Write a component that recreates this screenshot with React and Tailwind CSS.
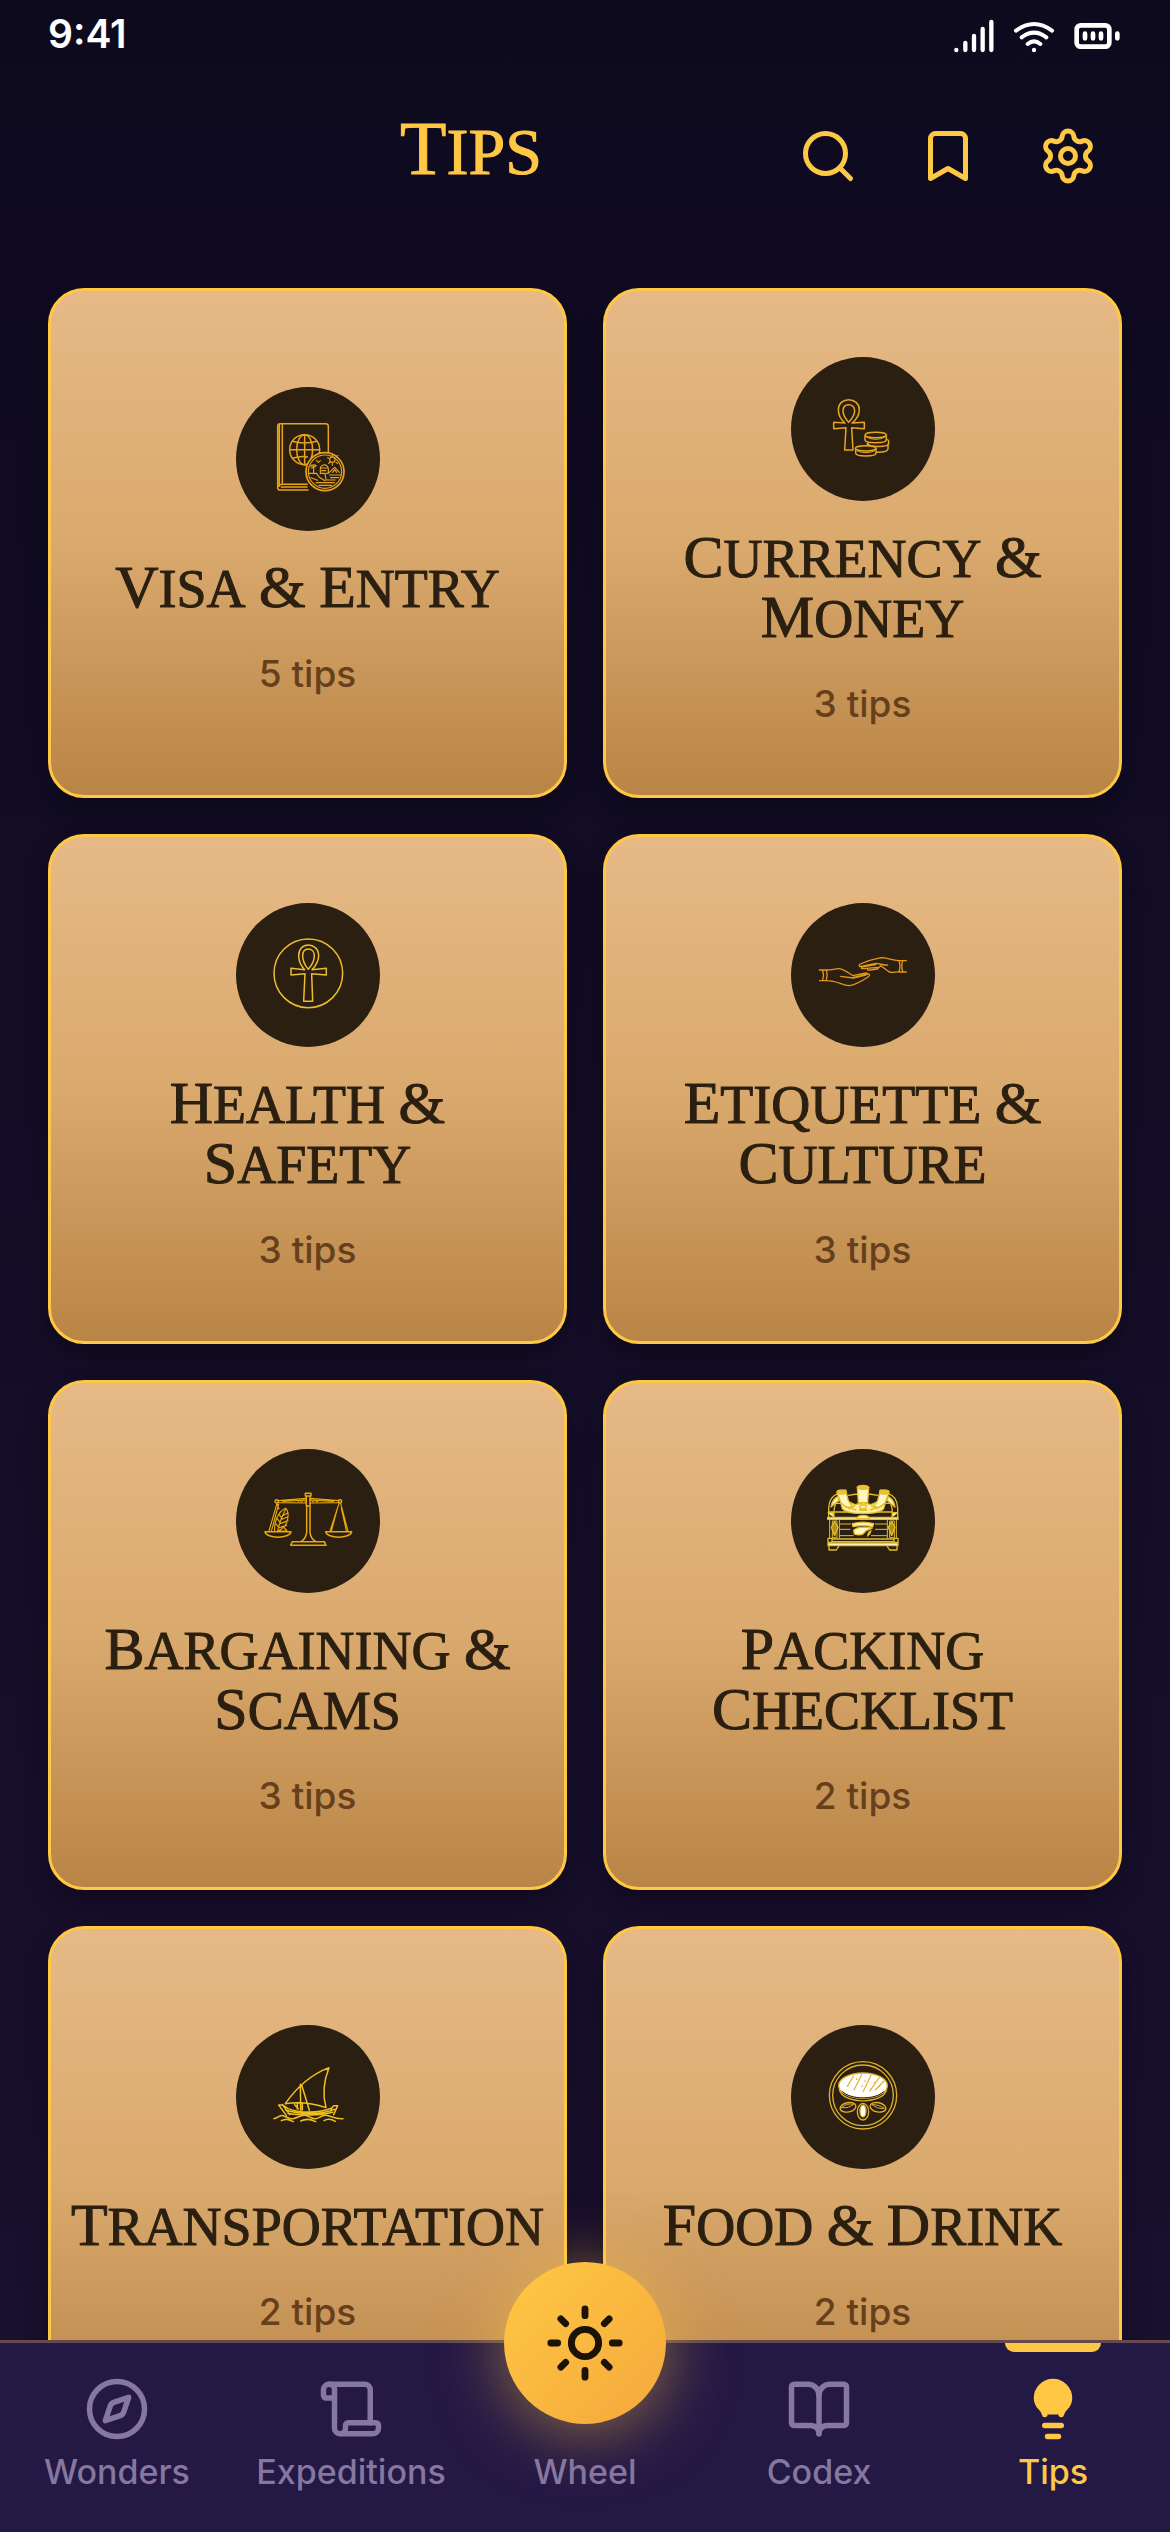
import React from "react";
import {
  Bookmark,
  BookOpen,
  Compass,
  Lightbulb,
  Scroll,
  Search,
  Settings,
  Sun,
} from "lucide-react";

const PassportIcon = () => (
  <svg className="size-full" viewBox="50 50 432 432" fill="none" stroke="#e9a31c" strokeWidth="4.5" strokeLinecap="round" strokeLinejoin="round">
    <path d="M266 359H182a7 7 0 0 1-7-7V168a8 8 0 0 1 8-8h136a8 8 0 0 1 8 8v78M189 161v181M180 161v186M189 342h74M176 350q4-8 13-8M186 350h77" />
    <circle cx="256" cy="238" r="45" />
    <ellipse cx="256" cy="238" rx="24" ry="45" />
    <path d="M256 193v90M211 238h90M219 213q37 10 74 0M219 264q30-9 45-4" />
    <circle cx="317" cy="304" r="57" fill="#2a1f10" strokeWidth="5" />
    <circle cx="317" cy="304" r="50" strokeWidth="3.5" />
    <circle cx="339" cy="268" r="8" strokeWidth="3.5" />
    <path strokeWidth="3.5" d="M339 252v5M325 262l4 2M328 279l4-3M350 260l5-4M350 276l5 4M339 280v5M291 270l6 6 6-5M274 288q8-8 17-2M276 284l7 4v22M276 293l12-4M270 309h22l8 12 17 10M303 309v-13a12 12 0 0 1 24-1v14h-6M305 293h20M307 301h12M304 309h13M317 309l3 20h28M330 306l16-15 14 15M340 306l6-8 6 8M331 314h33M334 322h24M275 322l20 8M290 337h55M299 345h38" />
  </svg>
);

const CurrencyIcon = () => (
  <svg className="size-full" viewBox="36 50 432 432" fill="none" stroke="#e6a522" strokeWidth="4.5" strokeLinejoin="round">
    <path d="M198 248C184 236 178 222 178 208c0-18 14-30 31-30s32 12 32 30c0 14-7 28-22 40l37-2v19l-38-3 4 67h-25l4-67-37 3v-19z" />
    <path d="M209 246c-10-11-17-24-17-34 0-12 7-19 17-19s18 7 18 19c0 10-8 23-18 34z" />
    <g fill="#2a1f10">
      <path d="M265 309v16c0 14 62 14 62 0v-16" />
      <path d="M267 302v7c0 13 62 13 62 0v-7c0-9-62-9-62 0z" />
      <path d="M258 285v13c0 12 64 12 64 0v-13" />
      <ellipse cx="290" cy="284" rx="32" ry="8" />
      <path d="M230 324v14c0 12 61 12 61 0v-14" />
      <ellipse cx="260" cy="324" rx="31" ry="8" />
    </g>
    <path d="M262 290q28 14 56 0M233 331q28 12 55 0" strokeWidth="3" />
  </svg>
);

const HealthIcon = () => (
  <svg className="size-full" viewBox="50 39 432 432" fill="none" stroke="#ecbd30" strokeWidth="4.5" strokeLinejoin="round">
    <circle cx="267" cy="250" r="103" />
    <path d="M256 239c-12-13-18-28-18-42 0-20 13-32 29-32s31 12 31 32c0 14-8 29-20 42l43-4v20l-44-4 3 83h-27l4-83-42 4v-20z" />
    <path d="M267 238c-11-13-17-28-17-40s6-21 17-21 18 9 18 21-7 27-18 40z" />
  </svg>
);

const HandsIcon = () => (
  <svg className="size-full" viewBox="36 39 432 432" fill="none" stroke="#e2981c" strokeWidth="4" strokeLinecap="round" strokeLinejoin="round">
    <path d="M121 240h22c12 1 25-4 36-4 14 0 28 12 43 21l39-8c5 0 3 5-1 6l-37 9-38-5M223 262l45-10c6 0 4 7-1 9-18 12-40 24-57 26-20-2-38-15-67-15h-21M131 240q5 16 0 32M142 240q5 16 0 32" />
    <path d="M382 212h-23c-20-1-35-9-53-9-22 4-43 11-62 19-6 3-4 8 2 7l44-9c13 0 23 7 36 5M290 224l-42 7c-4 4 1 5 6 5l42-4M266 236c-3 4 3 5 8 4l21-3 10-10 26 19c10 3 20-1 30 0h21M360 212q6 18 0 32M371 212q-5 18 0 32" />
  </svg>
);

const ScalesIcon = () => (
  <svg className="size-full" viewBox="50 57 432 432" fill="none" stroke="#e7a80f" strokeWidth="4.5" strokeLinecap="round" strokeLinejoin="round">
    <path d="M258 190h17v8h-17zM261 198h11v30h-11zM262 228v80c-2 14-8 22-18 27M272 228v80c2 14 8 22 18 27M261 228h11M219 335h96l5 11H214z" />
    <path d="M261 205l-84 7v6l84 1M272 205l86 7v6l-86 1M190 214l71-4M343 214l-71-4" strokeWidth="3.5" />
    <path d="M237 216l4-6 6 7 5-8 7 8M276 210l6 7 5-7 6 7 5-7" strokeWidth="3" />
    <circle cx="172" cy="214" r="5" />
    <circle cx="362" cy="214" r="5" />
    <path d="M137 305h78c-3 22-75 22-78 0zM319 305h78c-3 22-75 22-78 0z" />
    <path d="M173 220l-24 83M178 222l-22 82M173 220l6 17M359 220l-27 84M364 220l22 84M354 236l-18 67M366 234l15 68" strokeWidth="3.5" />
    <path d="M166 304c-2-25 8-58 33-69 8 6 10 24 3 43-5 12-15 20-27 26M175 303c5-25 12-43 23-64M177 290l-8-9M182 277l-9-12M188 264l-8-9M180 293l22-7M183 281l23-9M188 268l18-8M193 256l13-8M192 290l11 13h-24" strokeWidth="3.5" />
  </svg>
);

const ChestIcon = () => (
  <svg className="size-full" viewBox="36 57 432 432" fill="none" stroke="#e3bd2b" strokeWidth="4" strokeLinejoin="round">
    <path d="M149 262v-28c1-24 12-38 29-43M356 262v-28c-1-24-12-38-29-43M207 196q46-8 90 0M165 262v-20c1-16 5-24 12-32M340 262v-20c-1-16-5-24-12-32M166 220h30M310 220h30M150 246h190" />
    <path d="M178 199c-13 6-20 16-22 32l10-9 12-9zM326 199c13 6 20 16 22 32l-10-9-12-9z" fill="#fff6c4" />
    <path d="M182 208l8 28c10 10 24 13 42 14h40c18-1 32-4 42-14l8-28-24 6-22 10-24-6-24 6-22-10z" fill="#fdf0a2" />
    <path d="M174 188l26-8 8 32 12 18-18 2-16-13zM330 188l-26-8-8 32-12 18 18 2 16-13z" fill="#fff6c4" />
    <path d="M235 172h34l-3 46h-28z" fill="#fff6c4" />
    <ellipse cx="252" cy="172" rx="17" ry="6" fill="#e8c63c" />
    <ellipse cx="188" cy="186" rx="14" ry="6" fill="#e8c63c" />
    <ellipse cx="316" cy="186" rx="14" ry="6" fill="#e8c63c" />
    <path d="M193 225l18 11 18-9M276 227l18 9 18-11M209 233l22 7M295 233l-22 7M243 225h18v12h-18zM241 241h24" />
    <path d="M146 262h211v6H146zM146 248h17v14M357 248h-17v14" fill="#fdf0a2" />
    <path d="M234 266c1-13 36-13 37 0z" fill="#fff3ad" />
    <path d="M152 268v58M352 268v58M181 268v58M325 268v58M160 273h14v50h-14zM332 273h14v50h-14z" strokeWidth="3" />
    <path d="M167 275l10 17-10 25-10-25zM338 275l10 17-10 25-10-25z" fill="#b08c18" />
    <path d="M182 282h34M182 298h32M182 317h42M288 282h36M288 298h36M276 317h48" strokeWidth="3" />
    <path d="M220 281q32-9 64 0l-3 9q-30-6-59 0z" fill="#fff3ad" />
    <path d="M224 301c10-10 34-11 56-7-8 6-20 4-24 14-4 7-20 9-30 4zM266 318c1-8 3-13 10-16-2 8-4 12-10 16z" fill="#fff6c4" />
    <path d="M147 325h12v12h-12zM345 325h12v12h-12zM159 327h186M159 335h186" />
    <path d="M147 339h210v8H147z" fill="#fff3ad" />
    <path d="M150 348v12h22l8-12M354 348v12h-22l-8-12" />
  </svg>
);

const BoatIcon = () => (
  <svg className="size-full" viewBox="50 45 432 432" fill="none" stroke="#f0c020" strokeWidth="4.5" strokeLinecap="round" strokeLinejoin="round">
    <path d="M198 281c32-46 76-87 131-108-16 40-20 80-9 120-40-14-85-18-122-12zM319 178l8 2M243 223l1 78M247 225l23 76M249 280v20M226 284l11 12M234 281v16" />
    <path d="M178 285l11-1 17 12c35 14 94 14 132-2l5-7h12l-12 27M178 285l23 31M189 284l22 30M199 300c40 14 108 14 147-2M206 310c32 7 100 7 134-3M338 294l-4 9" />
    <path d="M164 326c12-2 17-11 27-9 14 3 17 12 30 9 13-2 22-11 35-10 14 1 20 12 33 10 12-1 18-11 30-10 20 2 26 12 52 10M186 332c14-6 22-4 36 3M244 333c16-8 30-6 45 2M314 332c10-6 24-4 34 2" />
  </svg>
);

const FoodIcon = () => (
  <svg className="size-full" viewBox="36 45 432 432" fill="none" stroke="#e0b02e" strokeWidth="4" strokeLinecap="round">
    <circle cx="252" cy="256" r="101" />
    <circle cx="252" cy="256" r="91" />
    <path d="M181 238c8 46 134 46 142 0" strokeWidth="4" />
    <ellipse cx="252" cy="227" rx="73" ry="38" fill="#fff" />
    <path d="M191 245c20 24 100 26 122 0" stroke="#2a1f10" strokeWidth="3" />
    <path d="M223 199l-18 30M248 194l-23 46M276 196l-23 48M301 203l-29 40M315 213l-26 27" strokeWidth="3.5" />
    <path d="M233 207v1M258 213v1M249 228v1M286 217v1M275 238v1M302 228v1" stroke="#e9a31c" />
    <ellipse cx="207" cy="292" rx="24" ry="14" transform="rotate(-12 207 292)" />
    <ellipse cx="297" cy="292" rx="24" ry="14" transform="rotate(12 297 292)" />
    <path d="M188 293c12-11 22-12 36-10-10 7-20 12-36 10zM280 284c14 0 24 3 36 11-14 2-26-2-36-11z" strokeWidth="3" />
    <ellipse cx="252" cy="305" rx="17" ry="25" />
    <ellipse cx="252" cy="303" rx="9" ry="18" fill="#fff" />
  </svg>
);

const categories = [
  { title: "Visa & Entry", count: 5, Icon: PassportIcon },
  { title: "Currency & Money", count: 3, Icon: CurrencyIcon },
  { title: "Health & Safety", count: 3, Icon: HealthIcon },
  { title: "Etiquette & Culture", count: 3, Icon: HandsIcon },
  { title: "Bargaining & Scams", count: 3, Icon: ScalesIcon },
  { title: "Packing Checklist", count: 2, Icon: ChestIcon },
  { title: "Transportation", count: 2, Icon: BoatIcon },
  { title: "Food & Drink", count: 2, Icon: FoodIcon },
];

const tabs = [
  { label: "Wonders", Icon: Compass },
  { label: "Expeditions", Icon: Scroll },
  { label: "Wheel", center: true },
  { label: "Codex", Icon: BookOpen },
  { label: "Tips", Icon: Lightbulb, active: true },
];

const StatusBar = () => (
  <div className="flex items-center justify-between px-12 h-[72px] shrink-0 text-white">
    <span className="pb-1 text-[39px] leading-[60px] font-semibold">9:41</span>
    <svg className="w-[168px] h-9" viewBox="75 54 504 108" fill="none" stroke="#fff" strokeLinecap="round">
      <path strokeWidth="13" d="M82 150v.1M109 129v21M135 108v42M161 87v63M187 66v84M315 150v.1" />
      <path strokeWidth="12" d="M261 92q54-40 108 0M278 112q37-28 74 0M296 132q19-16 38 0" />
      <rect x="443" y="76" width="98" height="64" rx="12" strokeWidth="14" />
      <path strokeWidth="14" d="M468 101v14M492 101v14M516 101v14M565 101v14" />
    </svg>
  </div>
);

const Header = () => (
  <header className="flex items-center gap-3 px-12 pt-[30px] pb-[78px] shrink-0 text-[#ffc844]">
    <div className="w-30" />
    <h1 className="flex-1 pb-2 text-center font-['Liberation_Serif',serif] uppercase text-[66px] leading-[84px] [-webkit-text-stroke:1px]">
      <span className="inline-block first-letter:text-[76px] first-letter:leading-[70px]">Tips</span>
    </h1>
    <button aria-label="Search" className="p-6">
      <Search className="size-[60px]" />
    </button>
    <button aria-label="Bookmarks" className="p-6">
      <Bookmark className="size-[60px]" />
    </button>
    <button aria-label="Settings" className="p-6">
      <Settings className="size-[60px]" />
    </button>
  </header>
);

// every word starts with a larger capital, the ampersand is all large
const Word = ({ children }) =>
  children === "&" ? (
    <span className="text-[60px] leading-[50px]">&amp;</span>
  ) : (
    <span className="inline-block first-letter:text-[60px] first-letter:leading-[50px]">
      {children}
    </span>
  );

const TipCard = ({ title, count, Icon }) => {
  return (
    <button className="min-h-[510px] px-9 flex flex-col items-center justify-center rounded-[36px] border-3 border-[#ffc844] bg-linear-to-b from-[#e6b986] via-[#daa96d] to-[#b98546] shadow-[0_12px_24px_rgba(0,0,0,0.3)]">
      <div className="size-36 rounded-full bg-[#2a1f10]">
        <Icon />
      </div>
      <h2 className="mt-7 font-['Liberation_Serif',serif] uppercase text-[54px] leading-[60px] text-[#2a1f10] [-webkit-text-stroke:1px]">
        {title.split(" ").map((word, i) => (
          <React.Fragment key={i}>
            {i > 0 && " "}
            <Word>{word}</Word>
          </React.Fragment>
        ))}
      </h2>
      <p className="mt-[30px] text-[37px] leading-[50px] font-medium text-[#66401c]">
        {count} tips
      </p>
    </button>
  );
};

const TabBar = () => (
  <nav className="relative z-10 grid grid-cols-5 shrink-0 border-t-3 border-[#654a50] bg-[#241845] text-[#8577a0]">
    {tabs.map(({ label, Icon, active, center }) => (
      <div key={label} className="relative flex justify-center">
        {active && (
          <div className="absolute top-0 w-24 h-[9px] rounded-b-[9px] bg-[#ffc844]" />
        )}
        {center && (
          <div className="absolute -top-[81px] size-[162px] rounded-full flex items-center justify-center bg-linear-to-br from-[#ffc844] to-[#f4a83c] text-[#1c1206] shadow-[0_6px_66px_rgba(255,200,68,0.5)]">
            <Sun className="size-[82px]" />
          </div>
        )}
        <button
          className={
            active
              ? "relative pt-[33px] pb-9 flex flex-col items-center gap-1.5 text-[#ffc844]"
              : "relative pt-[33px] pb-9 flex flex-col items-center gap-1.5"
          }
        >
          {center ? (
            <span className="size-[66px]" />
          ) : (
            <Icon className="size-[66px]" fill={active ? "currentColor" : "none"} />
          )}
          <span className="text-[34px] leading-[48px] font-medium">{label}</span>
        </button>
      </div>
    ))}
  </nav>
);

const App = () => {
  return (
    <div className="h-screen flex flex-col overflow-hidden bg-linear-to-b from-[#0e0a1e] to-[#1a1030] font-['Inter',sans-serif]">
      <StatusBar />
      <Header />
      <main className="flex-1 min-h-0 overflow-y-auto [scrollbar-width:none] px-12 grid grid-cols-2 gap-9 content-start">
        {categories.map((item) => (
          <TipCard key={item.title} {...item} />
        ))}
      </main>
      <TabBar />
    </div>
  );
};

export default App;
